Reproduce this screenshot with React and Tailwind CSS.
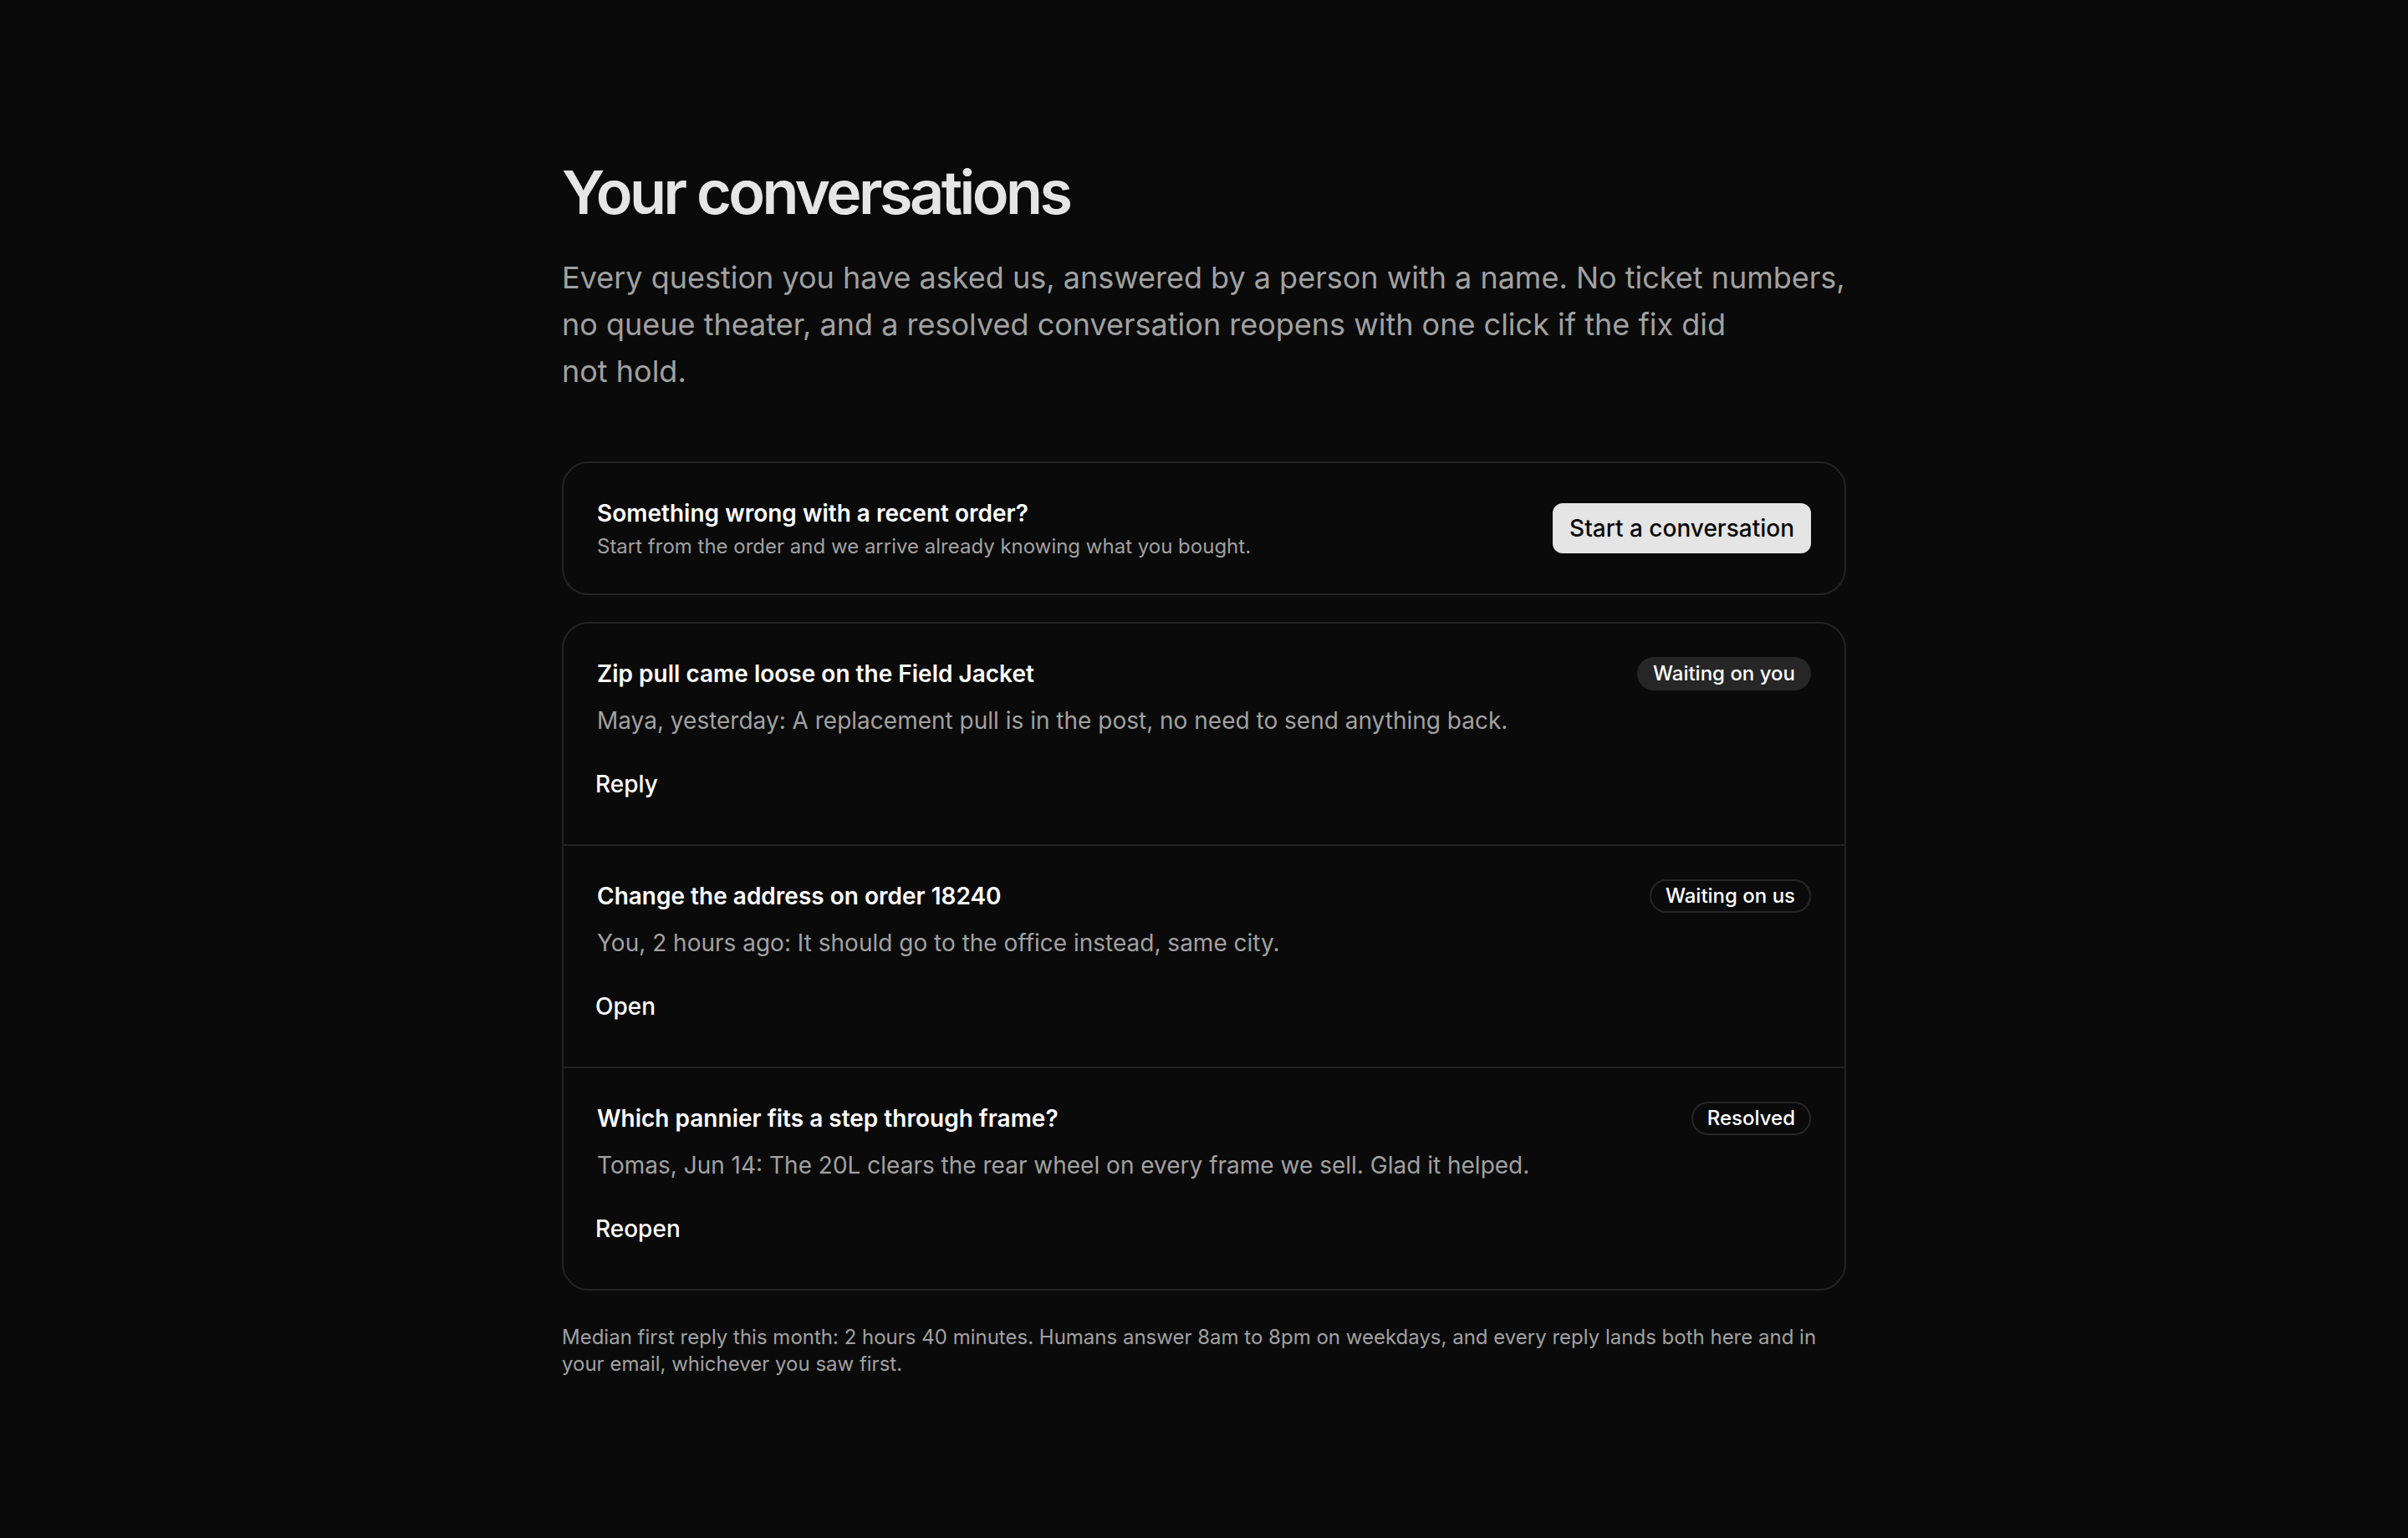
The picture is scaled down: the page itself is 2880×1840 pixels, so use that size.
import React from 'react';

const conversations = [
    {
        id: 1,
        title: 'Zip pull came loose on the Field Jacket',
        preview: 'Maya, yesterday: A replacement pull is in the post, no need to send anything back.',
        status: 'Waiting on you',
        action: 'Reply',
    },
    {
        id: 2,
        title: 'Change the address on order 18240',
        preview: 'You, 2 hours ago: It should go to the office instead, same city.',
        status: 'Waiting on us',
        action: 'Open',
    },
    {
        id: 3,
        title: 'Which pannier fits a step through frame?',
        preview: 'Tomas, Jun 14: The 20L clears the rear wheel on every frame we sell. Glad it helped.',
        status: 'Resolved',
        action: 'Reopen',
    },
];

function StatusBadge({ status }) {
    // only the one that needs the customer gets the filled pill
    if (status === 'Waiting on you') {
        return (
            <span className="inline-flex h-[40px] shrink-0 items-center rounded-full bg-[#262626] px-[19px] text-[24px] leading-[32px] font-medium text-white">
                {status}
            </span>
        );
    }
    return (
        <span className="inline-flex h-[40px] shrink-0 items-center rounded-full border-2 border-[#262626] px-[17px] text-[24px] leading-[32px] font-medium text-white">
            {status}
        </span>
    );
}

function ConversationRow({ item }) {
    return (
        <li className="p-[40px]">
            <div className="flex items-start justify-between gap-[32px]">
                <h2 className="text-[28px] leading-[40px] font-semibold text-white">{item.title}</h2>
                <StatusBadge status={item.status} />
            </div>
            <p className="mt-[12px] text-[28px] leading-[48px] text-[#a1a1a1]">{item.preview}</p>
            <button type="button" className="-ml-[2px] mt-[20px] flex h-[64px] items-center text-[28px] font-medium text-white">
                {item.action}
            </button>
        </li>
    );
}

export default function App() {
    return (
        <div className="min-h-screen bg-[#0a0a0a] font-['Inter',sans-serif] antialiased">
            <main className="mx-auto w-[1536px] pt-[190px] pb-[160px]">
                <h1 className="text-[72px] leading-[80px] font-semibold tracking-[-3.6px] text-[#e5e5e5]">
                    Your conversations
                </h1>
                <p className="mt-[34px] text-[36px] leading-[56px] text-pretty text-[#a1a1a1]">
                    Every question you have asked us, answered by a person with a name. No ticket numbers, no queue theater, and a resolved conversation reopens with one click if the fix did not hold.
                </p>

                <section className="mt-[80px] flex items-center justify-between gap-[32px] rounded-[32px] border-2 border-[#232323] p-[40px]">
                    <div>
                        <h2 className="text-[28px] leading-[40px] font-semibold text-white">Something wrong with a recent order?</h2>
                        <p className="mt-[4px] text-[24px] leading-[32px] text-[#a1a1a1]">
                            Start from the order and we arrive already knowing what you bought.
                        </p>
                    </div>
                    <button type="button" className="h-[60px] shrink-0 rounded-[12px] bg-[#e5e5e5] px-[20px] text-[28px] font-medium text-[#0a0a0a]">
                        Start a conversation
                    </button>
                </section>

                <ul className="mt-[32px] divide-y-2 divide-[#232323] rounded-[32px] border-2 border-[#232323]">
                    {conversations.map((item) => (
                        <ConversationRow key={item.id} item={item} />
                    ))}
                </ul>

                <p className="mt-[40px] text-[24px] leading-[32px] text-[#a1a1a1]">
                    Median first reply this month: 2 hours 40 minutes. Humans answer 8am to 8pm on weekdays, and every reply lands both here and in your email, whichever you saw first.
                </p>
            </main>
        </div>
    );
}
